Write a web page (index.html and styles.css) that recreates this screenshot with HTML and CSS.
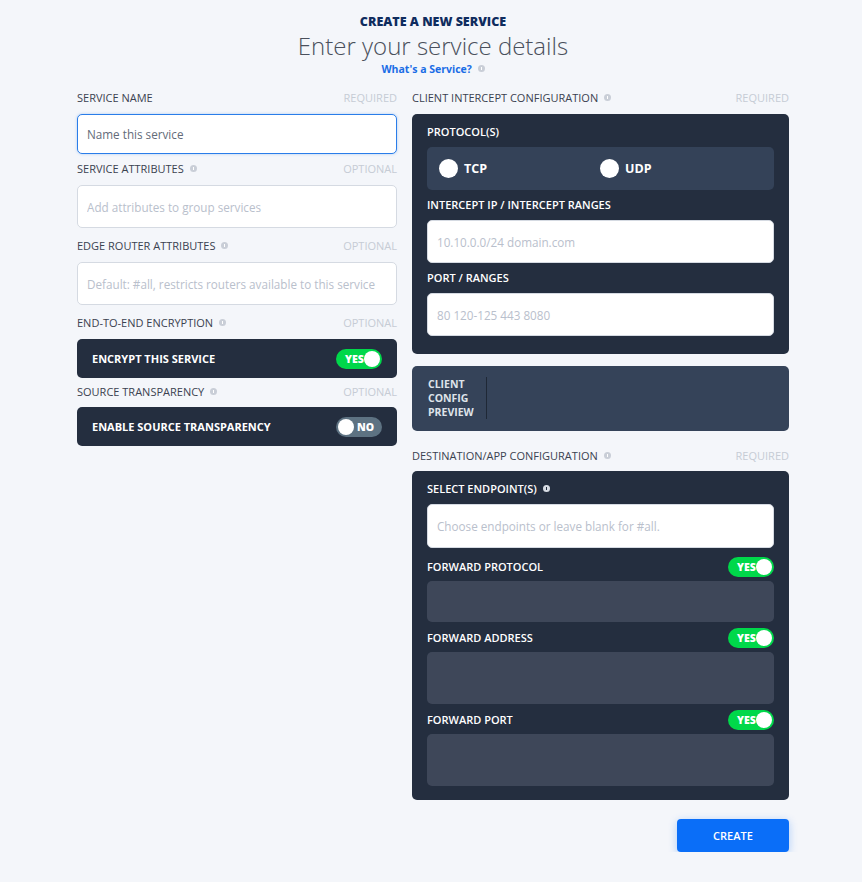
FILE: index.html
```html
<!DOCTYPE html>
<html lang="en">
<head>
<meta charset="UTF-8">
<title>Create a new service</title>
<link rel="stylesheet" href="styles.css">
</head>
<body>

<div class="page">
  <div class="header">
    <div class="kicker">CREATE A NEW SERVICE</div>
    <h1>Enter your service details</h1>
    <div class="help-line"><a class="help" href="#">What's a Service?</a> <span class="info"></span></div>
  </div>

  <div class="columns">
    <!-- left column -->
    <div class="col">
      <div class="label-row">
        <span class="label">SERVICE NAME</span>
        <span class="hint">REQUIRED</span>
      </div>
      <input class="field focused first" type="text" placeholder="Name this service">

      <div class="label-row">
        <span class="label">SERVICE ATTRIBUTES <span class="info"></span></span>
        <span class="hint">OPTIONAL</span>
      </div>
      <input class="field" type="text" placeholder="Add attributes to group services">

      <div class="label-row">
        <span class="label">EDGE ROUTER ATTRIBUTES <span class="info"></span></span>
        <span class="hint">OPTIONAL</span>
      </div>
      <input class="field" type="text" placeholder="Default: #all, restricts routers available to this service">

      <div class="label-row">
        <span class="label">END-TO-END ENCRYPTION <span class="info"></span></span>
        <span class="hint">OPTIONAL</span>
      </div>
      <div class="switch-box">
        <span>ENCRYPT THIS SERVICE</span>
        <span class="toggle on">YES</span>
      </div>

      <div class="label-row tight">
        <span class="label">SOURCE TRANSPARENCY <span class="info"></span></span>
        <span class="hint">OPTIONAL</span>
      </div>
      <div class="switch-box">
        <span>ENABLE SOURCE TRANSPARENCY</span>
        <span class="toggle off">NO</span>
      </div>
    </div>

    <!-- right column -->
    <div class="col">
      <div class="label-row">
        <span class="label">CLIENT INTERCEPT CONFIGURATION <span class="info"></span></span>
        <span class="hint">REQUIRED</span>
      </div>
      <div class="panel">
        <div class="sublabel">PROTOCOL(S)</div>
        <div class="protocols">
          <label class="radio"><span class="dot"></span>TCP</label>
          <label class="radio"><span class="dot"></span>UDP</label>
        </div>
        <div class="sublabel">INTERCEPT IP / INTERCEPT RANGES</div>
        <input class="field dark-in" type="text" placeholder="10.10.0.0/24 domain.com">
        <div class="sublabel">PORT / RANGES</div>
        <input class="field dark-in last" type="text" placeholder="80 120-125 443 8080">
      </div>

      <div class="preview">
        <div class="preview-title">CLIENT<br>CONFIG<br>PREVIEW</div>
        <div class="preview-body"></div>
      </div>

      <div class="label-row dest">
        <span class="label">DESTINATION/APP CONFIGURATION <span class="info"></span></span>
        <span class="hint">REQUIRED</span>
      </div>
      <div class="panel dest-panel">
        <div class="sublabel">SELECT ENDPOINT(S) <span class="info light"></span></div>
        <input class="field dark-in endpoints" type="text" placeholder="Choose endpoints or leave blank for #all.">

        <div class="fwd-row">
          <span class="sublabel">FORWARD PROTOCOL</span>
          <span class="toggle on">YES</span>
        </div>
        <div class="fwd-box small"></div>

        <div class="fwd-row">
          <span class="sublabel">FORWARD ADDRESS</span>
          <span class="toggle on">YES</span>
        </div>
        <div class="fwd-box"></div>

        <div class="fwd-row">
          <span class="sublabel">FORWARD PORT</span>
          <span class="toggle on">YES</span>
        </div>
        <div class="fwd-box"></div>
      </div>

      <div class="actions">
        <button class="create">CREATE</button>
      </div>
    </div>
  </div>
</div>

</body>
</html>
```

FILE: styles.css
```css
body {
  margin: 0;
  padding: 0 0 0 4px;
  background: #f4f6fa;
  font-family: "Open Sans", "Noto Sans", sans-serif;
  color: #3b4250;
}
.page {
  width: 712px;
  margin: 0 auto;
}
.header {
  text-align: center;
  padding-top: 14px;
}
.kicker {
  font-size: 12.5px;
  font-weight: 800;
  color: #0f2c5e;
  line-height: 16px;
}
h1 {
  margin: 0;
  font-size: 24px;
  font-weight: 300;
  color: #4a505c;
  line-height: 32px;
}
.help-line {
  font-size: 10.5px;
  line-height: 14px;
}
.help {
  font-weight: 700;
  color: #1a6de6;
  text-decoration: none;
}
.info {
  display: inline-block;
  width: 7px;
  height: 7px;
  border-radius: 50%;
  background: #c9ced7;
  margin-left: 3px;
  vertical-align: 1px;
  position: relative;
}
.info::after {
  content: "";
  position: absolute;
  left: 3px;
  top: 2px;
  width: 1px;
  height: 3px;
  background: #fff;
}
.info.light {
  background: #d8dde5;
}
.info.light::after {
  background: #242e3f;
}
.columns {
  display: grid;
  grid-template-columns: 320px 377px;
  gap: 15px;
  margin-top: 14px;
}
.label-row {
  display: flex;
  justify-content: space-between;
  align-items: center;
  height: 16px;
  margin-bottom: 8px;
  font-size: 11px;
  line-height: 14px;
}
.label {
  color: #3b4250;
}
.hint {
  color: #c6ccd5;
}
.label-row.tight {
  margin-top: -4px;
  margin-bottom: 7px;
}
.field {
  display: block;
  box-sizing: border-box;
  width: 100%;
  height: 43px;
  margin: 0 0 10px;
  padding: 0 9px;
  border: 1px solid #d5dae2;
  border-radius: 5px;
  background: #fff;
  font-family: inherit;
  font-size: 11.7px;
  font-weight: 500;
  outline: none;
}
.field::placeholder {
  color: #b9c0cc;
}
.field.focused {
  height: 40px;
  margin-bottom: 7px;
  border-color: #2a7de9;
  box-shadow: 0 0 3px rgba(42, 125, 233, 0.35);
}
.field.focused::placeholder {
  color: #636b78;
}
.switch-box {
  display: flex;
  justify-content: space-between;
  align-items: center;
  height: 39px;
  padding: 0 15px;
  margin-bottom: 10px;
  border-radius: 5px;
  background: #242e3f;
  color: #fff;
  font-size: 11px;
  font-weight: 700;
}
.toggle {
  position: relative;
  box-sizing: border-box;
  width: 46px;
  height: 20px;
  border-radius: 10px;
  font-size: 10.5px;
  font-weight: 800;
  color: #fff;
  line-height: 20px;
}
.toggle::after {
  content: "";
  position: absolute;
  top: 2px;
  width: 16px;
  height: 16px;
  border-radius: 50%;
  background: #fff;
}
.toggle.on {
  background: #00d84a;
  padding-left: 9px;
}
.toggle.on::after {
  right: 2px;
}
.toggle.off {
  background: #5d7282;
  padding-left: 21px;
}
.toggle.off::after {
  left: 2px;
}
.panel {
  padding: 11px 15px 18px;
  border-radius: 5px;
  background: #242e3f;
}
.sublabel {
  color: #fff;
  font-size: 11px;
  font-weight: 600;
  line-height: 14px;
  margin-bottom: 8px;
}
.protocols {
  display: flex;
  align-items: center;
  height: 43px;
  padding: 0 12px;
  margin-bottom: 8px;
  border-radius: 5px;
  background: #344258;
}
.radio {
  display: flex;
  align-items: center;
  width: 161px;
  color: #fff;
  font-size: 12.5px;
  font-weight: 700;
}
.dot {
  width: 19px;
  height: 19px;
  border-radius: 50%;
  background: #fff;
  margin-right: 6px;
}
.dark-in {
  margin-bottom: 8px;
}
.dark-in.last {
  margin-bottom: 0;
}
.preview {
  display: flex;
  align-items: center;
  height: 65px;
  margin-top: 12px;
  padding: 0 16px;
  border-radius: 5px;
  background: #354359;
}
.preview-title {
  padding-right: 12px;
  border-right: 1px solid #1f2836;
  color: #dfe3ea;
  font-size: 10.5px;
  font-weight: 700;
  line-height: 14px;
  margin-top: -2px;
}
.label-row.dest {
  margin-top: 17px;
  margin-bottom: 7px;
}
.dest-panel {
  padding-bottom: 14px;
}
.endpoints {
  height: 44px;
  margin-bottom: 9px;
}
.fwd-row {
  display: flex;
  justify-content: space-between;
  align-items: center;
  height: 20px;
  margin-bottom: 4px;
}
.fwd-row .sublabel {
  margin: 0;
}
.fwd-box {
  height: 52px;
  margin-bottom: 6px;
  border-radius: 5px;
  background: #3e4759;
}
.fwd-box.small {
  height: 41px;
}
.fwd-box:last-child {
  margin-bottom: 0;
}
.actions {
  display: flex;
  justify-content: flex-end;
  margin-top: 19px;
}
.create {
  width: 112px;
  height: 33px;
  border: 0;
  border-radius: 4px;
  background: #0a6ef8;
  color: #fff;
  font-family: inherit;
  font-size: 11px;
  font-weight: 600;
  box-shadow: 0 2px 8px rgba(10, 110, 248, 0.3);
  cursor: pointer;
}
```
